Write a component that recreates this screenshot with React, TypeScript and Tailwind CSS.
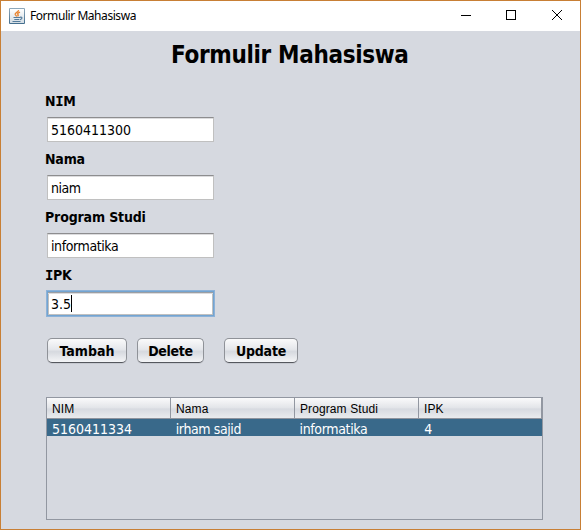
import React from "react";

const tahoma = "font-['DejaVu_Sans_Condensed','DejaVu_Sans',sans-serif] [font-stretch:condensed]";

function JavaIcon() {
  return (
    <svg width="16" height="16" viewBox="0 0 16 16" className="ml-2 shrink-0">
      <defs>
        <linearGradient id="tile" x1="0" y1="0" x2="0" y2="1">
          <stop offset="0" stopColor="#8fa9bc" />
          <stop offset="1" stopColor="#426d8d" />
        </linearGradient>
        <linearGradient id="face" x1="0" y1="0" x2="0" y2="1">
          <stop offset="0" stopColor="#ffffff" />
          <stop offset="1" stopColor="#d3dce3" />
        </linearGradient>
      </defs>
      <rect width="16" height="16" rx="1" fill="url(#tile)" />
      <rect x="1" y="1" width="14" height="14" fill="url(#face)" />
      <path d="M9.5 2.2C9.8 4.2 5.6 4.6 6.2 6.5C6.7 7.4 7.7 7.8 7.5 8.6M11 4.2C8.8 5 8.1 5.7 9 6.6C9.5 7.2 9.1 7.8 8.5 8.3" fill="none" stroke="#e8832f" strokeWidth="1.4" />
      <path d="M4.5 9.5H11M5.3 11.5H10.3M3.5 13.5H11.5M11 9.3C13.7 8.6 13.5 11 11 11.6" fill="none" stroke="#547b9b" strokeWidth="1.2" />
    </svg>
  );
}

function Field({ label, value, focused = false, labelClass, valueClass }: {
  label: React.ReactNode; value: string; focused?: boolean; labelClass: string; valueClass: string;
}) {
  return (
    <div className="h-[58px]">
      <div className={`h-[25px] pt-px text-[14px] leading-[17px] font-bold whitespace-nowrap ${labelClass}`}>{label}</div>
      <div className={`relative ml-[2px] flex h-[25px] w-[167px] items-center border bg-white pt-[2px] pl-[3px] text-[14px] leading-[17px] ${focused ? "border-[#73a4d1] outline-1 outline-[#8db2d8] shadow-[inset_0_1px_0_#9b9ea3,inset_0_2px_0_#dcdcde,inset_1px_0_0_#c0c0c0,inset_-1px_0_0_#c0c0c0,inset_0_-1px_0_#c0c0c0]" : "border-[#c0c0c0] border-t-[#8d8d8f] shadow-[inset_0_1px_0_#dcdcde]"}`}>
        <span className={`whitespace-nowrap ${valueClass}`}>{value}</span>
        {focused && <span className="absolute left-[23px] top-[3px] h-[17px] w-px bg-black" />}
      </div>
    </div>
  );
}

function Button({ text, className }: { text: string; className: string }) {
  return (
    <button className={`flex h-[25px] items-center justify-center rounded-[5px] border border-[#8f9298] border-b-[#55585e] bg-[linear-gradient(#fafafb,#e5e7eb_45%,#d6d9df_55%,#f4f5f7)] pt-px shadow-[0_1px_0_#c6c9d0] text-[14px] leading-[17px] font-bold whitespace-nowrap ${className}`}>
      {text}
    </button>
  );
}

const columns = [
  { title: "NIM", value: "5160411334", style: "pl-[5px]" },
  { title: "Nama", value: "irham sajid", style: "pl-[5px] tracking-[-0.4px]" },
  { title: "Program Studi", value: "informatika", style: "pl-[5px] tracking-[-0.35px]" },
  { title: "IPK", value: "4", style: "pl-[6px]" },
];

export default function App() {
  return (
    <div className={`flex h-[530px] w-[581px] flex-col overflow-hidden border border-[#c87f35] bg-[#d6d9e0] text-black ${tahoma}`}>
      <header className="flex h-[30px] shrink-0 items-center bg-white">
        <JavaIcon />
        <span className="ml-[5px] font-['Noto_Sans',sans-serif] text-[12px] leading-4 tracking-[-0.44px] whitespace-nowrap">Formulir Mahasiswa</span>
        <svg width="104" height="12" viewBox="0 0 104 12" className="ml-auto mr-[15px]" fill="none" stroke="black" shapeRendering="crispEdges">
          <path d="M0 5.5H10M45.5 0.5H54.5V9.5H45.5Z" />
          <path d="M91 0L101 10M101 0L91 10" shapeRendering="auto" />
        </svg>
      </header>
      <main className="flex flex-1 flex-col pl-[44px]">
        <h1 className="ml-[126px] h-[61px] pt-[10px] text-[24px] leading-[29px] font-bold tracking-[-0.34px] whitespace-nowrap">Formulir Mahasiswa</h1>
        <Field label={<>N<I />M</>} value="5160411300" labelClass="tracking-[-0.2px]" valueClass="" />
        <Field label="Nama" value="niam" labelClass="tracking-[-0.2px]" valueClass="tracking-[-0.5px]" />
        <Field label="Program Studi" value="informatika" labelClass="tracking-[-0.15px]" valueClass="tracking-[-0.4px]" />
        <Field label={<><I />PK</>} value="3.5" focused labelClass="tracking-[-0.2px]" valueClass="" />
        <div className="mt-[14px] ml-[2px] flex h-[25px]">
          <Button text="Tambah" className="w-[80px] tracking-[0px]" />
          <Button text="Delete" className="ml-[10px] w-[67px] tracking-[-0.3px]" />
          <Button text="Update" className="ml-[20px] w-[74px] tracking-[-0.2px]" />
        </div>
        <div className="mt-[34px] ml-px h-[123px] w-[497px] border border-[#9297a1]">
          <div className="flex h-[21px] border-b border-[#8e939d] bg-[linear-gradient(#fafafb,#e3e5e9_48%,#d7dae0_55%,#e9ebee)] font-['Liberation_Sans',Arial,sans-serif] text-[12px] leading-[22px] tracking-[0.1px]">
            {columns.map((c) => <div key={c.title} className="h-[20px] w-[124px] border-r border-[#9297a1] pl-[5px] last:w-[123px]">{c.title}</div>)}
          </div>
          <div className="flex h-[17px] overflow-hidden bg-[#39698a] text-[14px] leading-[20px] text-white">
            {columns.map((c) => <div key={c.title} className={`w-[124px] whitespace-nowrap ${c.style}`}>{c.value}</div>)}
          </div>
        </div>
      </main>
    </div>
  );
}

function I() {
  return <span className="inline-block w-[8px] text-center font-['DejaVu_Sans_Mono',monospace] leading-[14px] tracking-normal">I</span>;
}
